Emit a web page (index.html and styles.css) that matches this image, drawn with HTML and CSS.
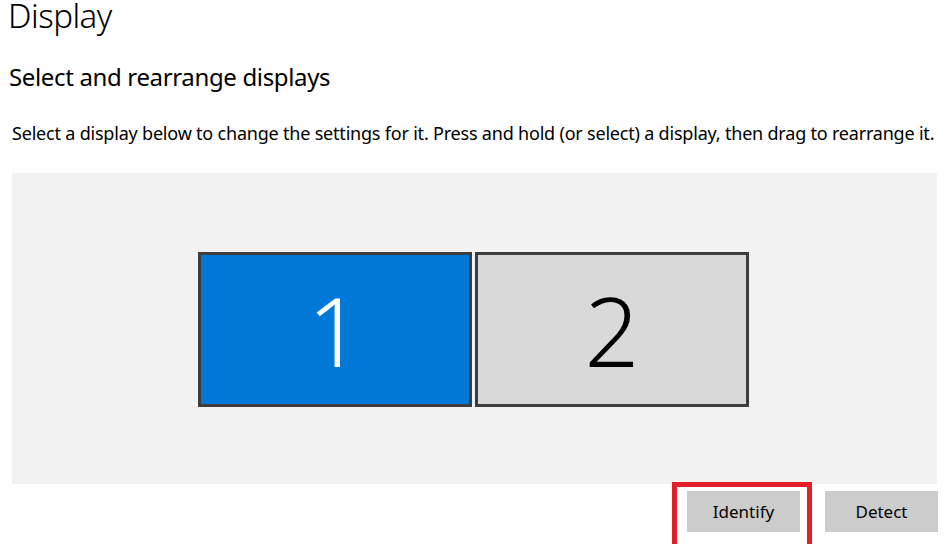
FILE: index.html
```html
<!DOCTYPE html>
<html lang="en">
<head>
<meta charset="utf-8">
<title>Display</title>
<link rel="stylesheet" href="styles.css">
</head>
<body>
<main class="page">
  <h1 class="title">Display</h1>
  <h2 class="subtitle">Select and rearrange displays</h2>
  <p class="desc">Select a display below to change the settings for it. Press and hold (or select) a display, then drag to rearrange it.</p>
  <div class="canvas">
    <div class="monitors">
      <div class="monitor monitor-active">1</div>
      <div class="monitor">2</div>
    </div>
  </div>
  <div class="actions">
    <span class="highlight"><button class="btn">Identify</button></span>
    <button class="btn">Detect</button>
  </div>
</main>
</body>
</html>
```

FILE: styles.css
```css
* { box-sizing: border-box; }
html, body { margin: 0; padding: 0; background: #fff; }
body {
  font-family: "Noto Sans", "Open Sans", sans-serif;
  color: #000;
  width: 951px;
  height: 544px;
  overflow: hidden;
}
.page {
  padding: 0 0 0 8px;
}
.title {
  margin: 0;
  font-size: 33px;
  font-weight: 300;
  letter-spacing: -0.5px;
  line-height: 32px;
}
.subtitle {
  margin: 29px 0 0 1px;
  font-size: 24px;
  font-weight: 400;
  letter-spacing: -0.35px;
  line-height: 32px;
}
.desc {
  margin: 28px 0 0 4px;
  font-size: 18px;
  letter-spacing: -0.2px;
  line-height: 24px;
}
.canvas {
  margin: 28px 0 0 4px;
  width: 925px;
  height: 311px;
  background: #f2f2f2;
  display: flex;
  align-items: center;
  justify-content: center;
}
.monitors {
  display: flex;
  gap: 3px;
  margin-left: -2px;
  margin-top: 2px;
}
.monitor {
  width: 274px;
  height: 155px;
  border: 3px solid #3d3d3d;
  background: #d9d9d9;
  display: flex;
  align-items: center;
  justify-content: center;
  font-size: 96px;
  font-weight: 300;
  color: #000;
  line-height: 1;
}
.monitor-active {
  background: #0078d7;
  color: #fff;
}
.actions {
  width: 930px;
  margin-top: 7px;
  display: flex;
  justify-content: flex-end;
  gap: 25px;
}
.highlight {
  position: relative;
  display: inline-flex;
}
.highlight::after {
  content: "";
  position: absolute;
  left: -15px;
  right: -12px;
  top: -9px;
  bottom: -20px;
  border: 5px solid #e3202a;
  pointer-events: none;
}
.btn {
  font-family: "Noto Sans", "Open Sans", sans-serif;
  font-size: 17px;
  color: #000;
  background: #cccccc;
  border: none;
  width: 113px;
  height: 41px;
  padding: 0;
  margin: 0;
}
```
